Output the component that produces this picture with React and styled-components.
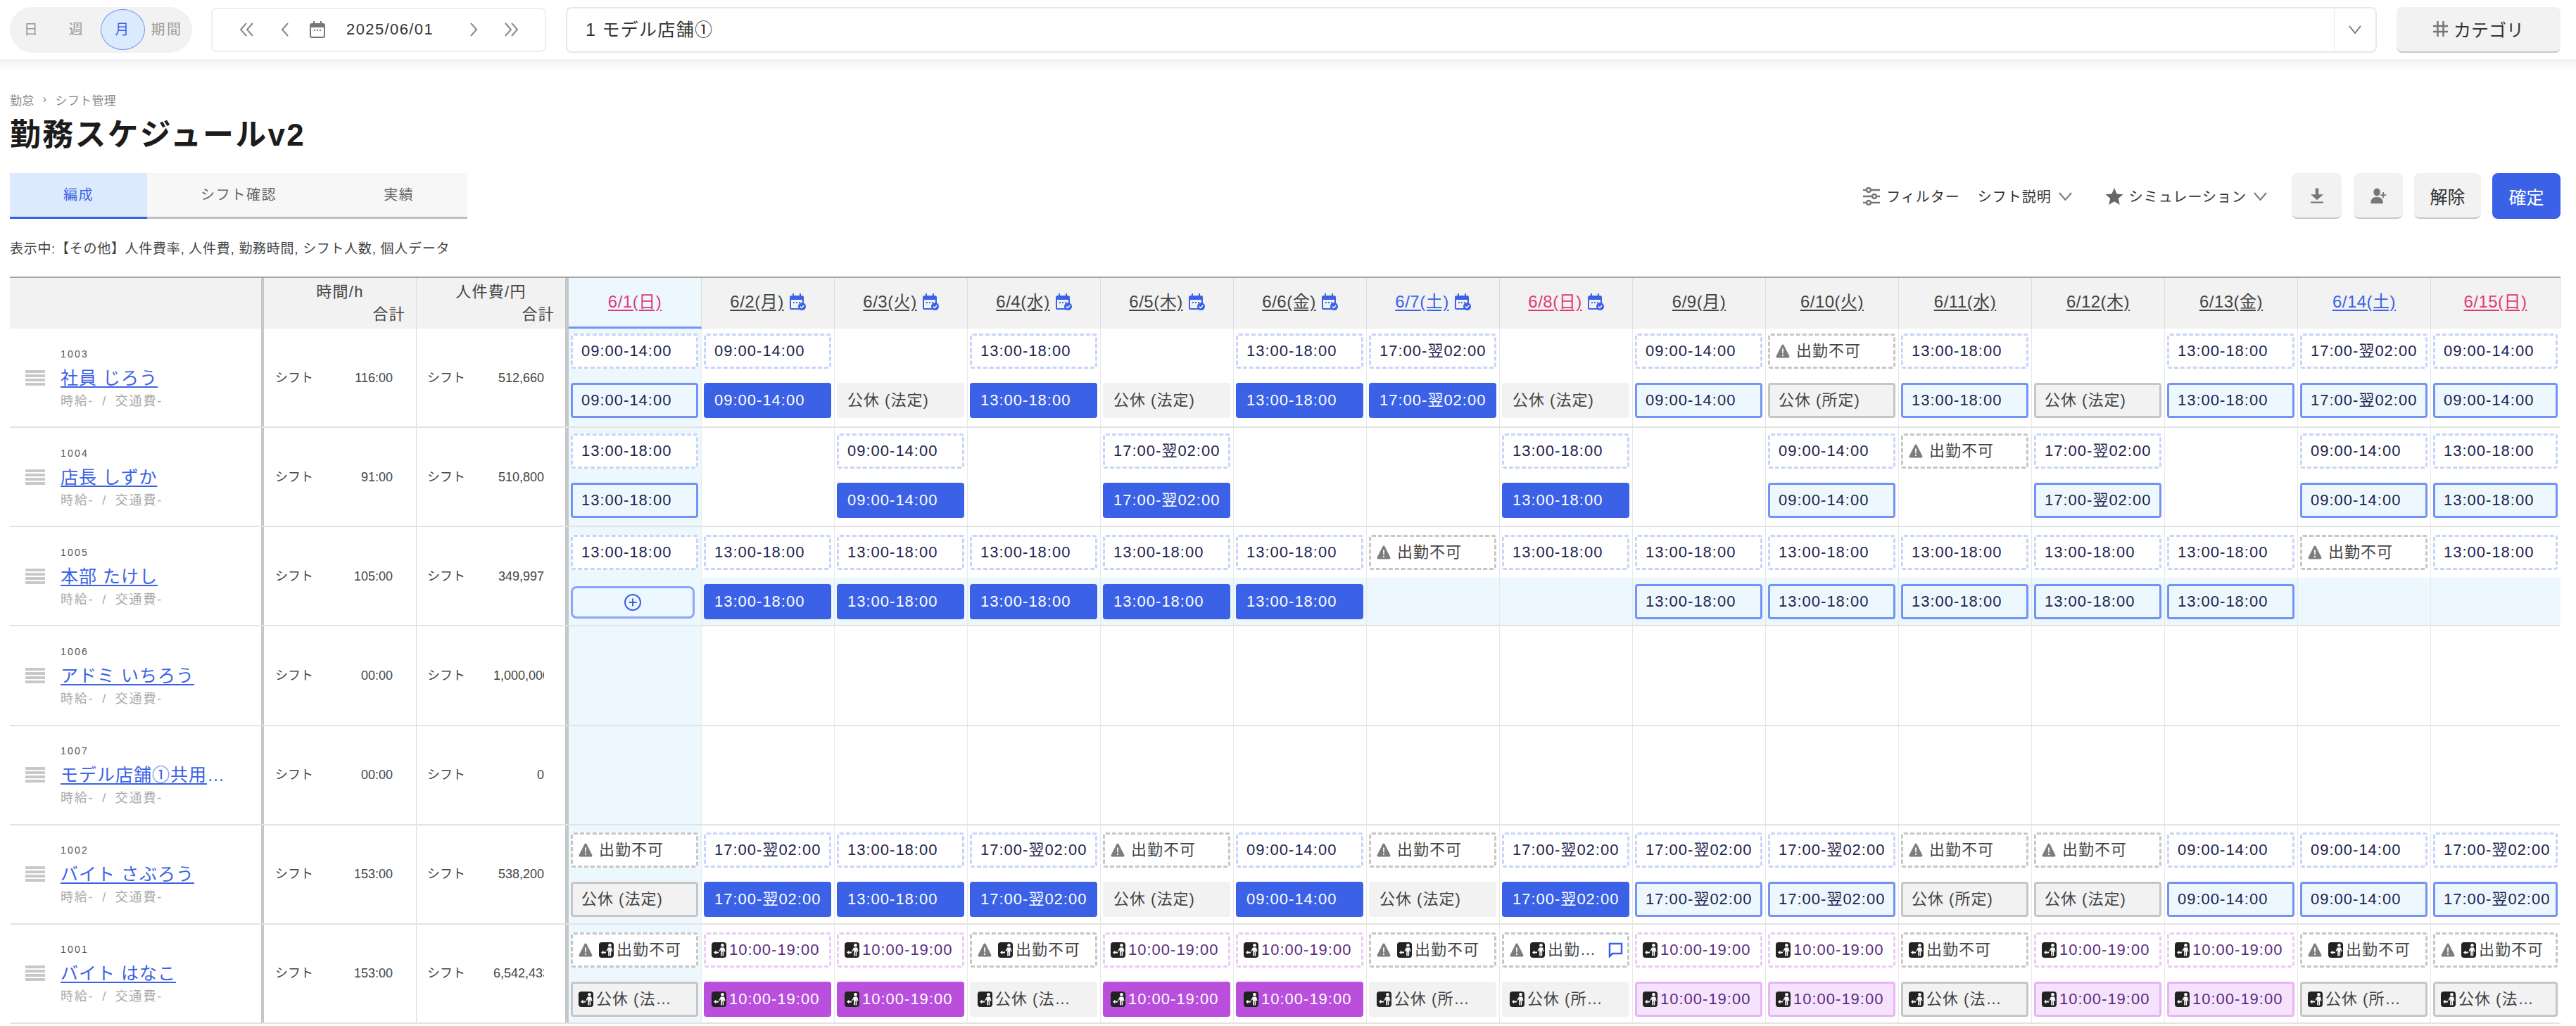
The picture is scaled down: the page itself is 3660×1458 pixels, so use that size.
import React from 'react';
import styled, { createGlobalStyle, css } from 'styled-components';

const Global = createGlobalStyle`
  html, body { margin: 0; padding: 0; background: #fff; overflow: hidden; }
  body { font-family: "Liberation Sans", "Noto Sans CJK JP", sans-serif; color: #333; }
  * { box-sizing: border-box; }
`;

const Page = styled.div`width: 3660px; height: 1458px; overflow: hidden; background: #fff;`;

const Header = styled.header`
  height: 84px; display: flex; align-items: center; padding: 0 22px 0 14px; background: #fff;
`;
const HeaderFade = styled.div`height: 16px; background: linear-gradient(#f1f1f1, #fff);`;

const Pill = styled.div`
  width: 259px; height: 65px; border-radius: 33px; background: #f2f2f2; display: flex; align-items: center;
  padding-left: 1px; margin-right: 27px; flex: none;
`;
const PillItem = styled.div`
  width: ${p => p.$w}px; height: 58px; display: flex; align-items: center; justify-content: center;
  font-size: 20px; letter-spacing: 2.5px; color: #9a9a9a; border-radius: 50%; line-height: 24px;
  ${p => p.$on && css`background: #dceafd; border: 1px solid #7394f5; color: #3b62e6;`}
`;
const DateNav = styled.div`
  width: 476px; height: 63px; flex: none; border: 2px solid #eee; border-radius: 8px; display: flex; align-items: center;
  padding-left: 38px; margin-right: 28px; position: relative;
`;
const NavIcon = styled.svg`width: ${p => p.$w || 22}px; height: 24px; flex: none; margin-left: ${p => p.$ml || 0}px; color: #888;`;
const DateText = styled.span`font-size: 22px; letter-spacing: 1.4px; color: #333; margin-left: 30px; width: 174px;`;
const StoreSelect = styled.div`
  flex: none; width: 2573px; height: 65px; border: 2px solid #e8e8e8; border-radius: 8px; display: flex; align-items: center;
  margin-right: 28px;
`;
const StoreName = styled.div`flex: 1; padding-left: 26px; font-size: 25px; letter-spacing: 1.3px; color: #333; line-height: 30px;`;
const StoreCaret = styled.div`width: 59px; height: 100%; border-left: 1px solid #eaeaea; display: flex; align-items: center; justify-content: center;`;
const CategoryBtn = styled.button`
  flex: 1; height: 65px; background: #f2f2f2; border: 0; border-bottom: 2px solid #c8c8c8; border-radius: 8px;
  display: flex; align-items: center; justify-content: center; gap: 8px;
  font: inherit; font-size: 25px; color: #333;
`;

const Main = styled.main`padding: 0 22px 0 14px;`;
const Crumbs = styled.div`
  margin-top: 31px; height: 20px; display: flex; align-items: center; gap: 12px; font-size: 17px; letter-spacing: .3px; color: #888;
`;
const Title = styled.h1`
  margin: 15px 0 0; height: 52px; line-height: 52px; font-size: 44px; font-weight: 700; color: #1c1c1c; letter-spacing: 2.2px;
`;
const ToolRow = styled.div`margin-top: 28px; height: 65px; display: flex; align-items: stretch; justify-content: space-between;`;
const Tabs = styled.div`display: flex;`;
const Tab = styled.div`
  padding: 0 76px; display: flex; align-items: center; font-size: 20px; letter-spacing: 1.6px; line-height: 26px;
  ${p => p.$on ? css`background: #dceafd; color: #3b62e6; border-bottom: 3px solid #3b62e6;`
                : css`background: #f7f7f7; color: #666; border-bottom: 3px solid #bfbfbf;`}
`;
const Tools = styled.div`display: flex; align-items: center;`;
const ToolText = styled.div`
  display: flex; align-items: center; font-size: 20px; letter-spacing: 1px; color: #333; margin-right: ${p => p.$mr || 0}px;
`;
const GrayBtn = styled.button`
  width: ${p => p.$w}px; height: 65px; margin-left: ${p => p.$ml || 0}px; background: #f2f2f2; border: 0; border-bottom: 2px solid #c8c8c8;
  border-radius: 8px; display: flex; align-items: center; justify-content: center; font: inherit; font-size: 25px; color: #333;
`;
const PrimaryBtn = styled(GrayBtn)`background: #3b62e6; border-bottom: 0; color: #fff;`;

const Note = styled.div`margin-top: 33px; height: 20px; line-height: 20px; font-size: 19px; letter-spacing: .7px; color: #444;`;

const Table = styled.div`margin-top: 29px; border-top: 2px solid #a5a5a5;`;
const gridCols = css`
  display: grid;
  grid-template-columns: 361px 217px 216px repeat(14, 189px) 1fr;
`;
const HeadRow = styled.div`${gridCols} height: 72px; background: #f2f2f2;`;
const Row = styled.div`${gridCols} height: 141.15px; border-bottom: 2px solid #e3e3e3;`;

const BlankHead = styled.div`border-right: 4px solid #c5c8c8;`;
const SumHead = styled.div`
  display: flex; flex-direction: column; padding: 4px 15px 0 0; font-size: 22px; letter-spacing: 1.3px; color: #444;
  border-right: ${p => p.$thick ? '5px solid #c5c8c8' : '1px solid #dcdcdc'};
  & > div { height: 32px; line-height: 32px; }
  & > div:first-child { text-align: center; padding-left: 15px; }
  & > div:last-child { text-align: right; }
`;
const DayHead = styled.div`
  display: flex; align-items: center; justify-content: center; gap: 8px; padding-bottom: 5px;
  border-right: 1px solid #dcdcdc; font-size: 24px; letter-spacing: .5px; line-height: 30px;
  color: ${p => p.$c};
  ${p => p.$today && css`background: #ecf8fe; border-bottom: 3px solid #7394f5; padding-bottom: 2px;`}
  & > span { text-decoration: underline; text-underline-offset: 3px; }
`;

const NameCell = styled.div`
  display: flex; align-items: center; padding-left: 22px; gap: 22px; border-right: 4px solid #c5c8c8; min-width: 0;
`;
const Handle = styled.div`
  width: 28px; height: 22px; flex: none;
  background: repeating-linear-gradient(#c8c8c8 0 4px, #fff 4px 6px);
`;
const NameBlock = styled.div`min-width: 0; display: flex; flex-direction: column; padding-top: 2px;`;
const EmpId = styled.div`font-size: 14px; line-height: 16px; letter-spacing: 2.2px; color: #555;`;
const EmpName = styled.a`
  display: block; margin-top: 10px; max-width: 240px; height: 32px; line-height: 32px; font-size: 25px; letter-spacing: 1px;
  color: #3b62e6; text-decoration: underline; text-decoration-thickness: 2px; text-underline-offset: 3px;
  white-space: nowrap; overflow: hidden; text-overflow: ellipsis;
`;
const EmpSub = styled.div`margin-top: 6px; font-size: 18px; line-height: 22px; letter-spacing: 1.8px; word-spacing: 5px; color: #aaa;`;
const SumCell = styled.div`
  display: flex; align-items: center; justify-content: space-between; font-size: 18px; color: #444; line-height: 24px;
  padding: 0 ${p => p.$pr}px 0 ${p => p.$pl}px;
  border-right: ${p => p.$thick ? '5px solid #c5c8c8' : '1px solid #dcdcdc'};
`;
const SumValue = styled.div`width: 72px; text-align: right; overflow: hidden; white-space: nowrap;`;

const DayCell = styled.div`
  border-right: 1px solid #e8e8e8; display: flex; flex-direction: column; gap: 20px;
  padding: ${p => p.$top}px 4px 0 3px; min-width: 0;
  ${p => p.$today ? css`background: #ecf8fe;` : p.$band && css`background: linear-gradient(#fff 72px, #ecf8fe 72px);`}
  &:last-child { border-right: 0; }
`;
const Slot = styled.div`height: 50px; flex: none;`;

const kinds = {
  plan: css`border: 3px dashed #c8d4fb; background: #fff; color: #1c2350;`,
  off: css`border: 3px dashed #c6c6c6; background: #fff; color: #444;`,
  pplan: css`border: 3px dashed #edc8f8; background: #fff; color: #5c2a7c;`,
  solid: css`background: #3b62e6; color: #fff;`,
  flat: css`background: #f2f2f2; color: #444;`,
  outline: css`border: 3px solid #7394f5; background: #ecf8fe; color: #1c2350;`,
  grayline: css`border: 3px solid #c6c6c6; background: #f2f2f2; color: #444;`,
  psolid: css`background: #b94fdc; color: #fff;`,
  pline: css`border: 3px solid #e8b4f8; background: #f5e2fc; color: #5c2a7c;`,
};
const Chip = styled.div`
  height: 50px; flex: none; border-radius: 4px; display: flex; align-items: center; white-space: nowrap; overflow: hidden;
  font-size: 22px; line-height: 28px; letter-spacing: 1px;
  padding-left: ${p => (p.$lead ? 11 : 15) - (p.$bordered ? 3 : 0)}px; padding-right: 6px;
  ${p => kinds[p.$kind]}
`;
const AddChip = styled.div`
  height: 46px; width: 176px; margin-top: 3px; border: 3px solid #8ba6f7; border-radius: 8px; background: #ecf8fe;
  display: flex; align-items: center; justify-content: center;
`;
const ChipText = styled.span`min-width: 0; overflow: hidden; text-overflow: ellipsis; ${p => p.$max && css`max-width: ${p.$max}px;`}`;
const Warn = styled.svg`width: 20px; height: 20px; flex: none; margin-right: 9px;`;
const Carrier = styled.svg`width: 21px; height: 22px; flex: none; margin-right: ${p => p.$mr ?? 4}px;`;
const Comment = styled.svg`width: 21px; height: 22px; flex: none; margin-left: auto;`;

const Chev = ({ d, w = 22, ml, color = '#888' }) => (
  <NavIcon $w={w} $ml={ml} viewBox={`0 0 ${w} 24`} fill="none" stroke={color} strokeWidth="2"><path d={d} /></NavIcon>
);
const CalendarPlain = () => (
  <NavIcon $w={22} $ml={28} viewBox="0 0 22 24"><path fill="#777" d="M5 0h2v3h8V0h2v3h2a3 3 0 0 1 3 3v15a3 3 0 0 1-3 3H3a3 3 0 0 1-3-3V6a3 3 0 0 1 3-3h2zM2 9v12a1 1 0 0 0 1 1h16a1 1 0 0 0 1-1V9zM6 12h2v2H6zM10 12h2v2h-2zM14 12h2v2h-2z" /></NavIcon>
);
const CalCheck = styled.svg`width: 23px; height: 24px; flex: none;`;
const CalendarCheck = () => (
  <CalCheck viewBox="0 0 23 24">
    <path fill="#3b62e6" d="M4 0h2v3h8V0h2v3h1.5A2.5 2.5 0 0 1 20 5.500v15a2.500 2.500 0 0 1-2.500 2.500h-15A2.500 2.500 0 0 1 0 20.500v-15A2.500 2.500 0 0 1 2.500 3H4zM2 9v11.500a.5.5 0 0 0 .5.5h15a.5.5 0 0 0 .5-.5V9zM5 12h2v2H5zM9 12h2v2H9zM13 12h2v2h-2z" />
    <circle cx="17.500" cy="18.500" r="5.500" fill="#3b62e6" />
    <path d="M15 18.500l2 2 3.200-3.500" stroke="#fff" strokeWidth="1.500" fill="none" />
  </CalCheck>
);
const WarnIcon = () => (
  <Warn viewBox="0 0 20 20"><path fill="#7d7d7d" d="M8.500 1.500c.7-1.300 2.300-1.300 3 0l7.800 15.500c.5 1.200-.2 2.500-1.500 2.500H2.200c-1.300 0-2-1.300-1.500-2.500z" /><path fill="#fff" d="M9 6.500h2l-.3 7H9.300zM9 15h2v2H9z" /></Warn>
);
const CarrierIcon = ({ mr }) => (
  <Carrier $mr={mr} viewBox="0 0 21 22">
    <rect width="21" height="22" rx="4" fill="#222" />
    <circle cx="15.500" cy="4.300" r="2.300" fill="#fff" />
    <path fill="#fff" d="M13 7.500h5l1.500 5.500-1.300.4-1-3v9.100h-1.600v-6h-.8v6h-1.600v-9l-1.500 2.500-1.200-.8z" />
    <path fill="#fff" d="M3 14.500l3.300-2.800v1.800H10v2H6.300v1.800z" />
  </Carrier>
);

const NAMES = { a: '09:00-14:00', b: '13:00-18:00', c: '17:00-翌02:00', p: '10:00-19:00' };
const h = 'h', j = 'j';
const EMP = [
  { id: 1003, name: '社員 じろう', hours: '116:00', cost: '512,660', top: 7,
    plan: ['a','a','','b','','b','c','','a','x','b','','b','c','a'],
    act:  ['a','a',h,'b',h,'b','c',h,'a',j,'b',h,'b','c','a'] },
  { id: 1004, name: '店長 しずか', hours: '91:00', cost: '510,800', top: 8,
    plan: ['b','','a','','c','','','b','','a','x','c','','a','b'],
    act:  ['b','','a','','c','','','b','','a','','c','','a','b'] },
  { id: 1005, name: '本部 たけし', hours: '105:00', cost: '349,997', top: 11, band: true,
    plan: ['b','b','b','b','b','b','x','b','b','b','b','b','b','x','b'],
    act:  ['+','b','b','b','b','b','','','b','b','b','b','b','',''] },
  { id: 1006, name: 'アドミ いちろう', hours: '00:00', cost: '1,000,000', top: 11, plan: [], act: [] },
  { id: 1007, name: 'モデル店舗①共用アカウント', hours: '00:00', cost: '0', top: 11, plan: [], act: [] },
  { id: 1002, name: 'バイト さぶろう', hours: '153:00', cost: '538,200', top: 10,
    plan: ['x','c','b','c','x','a','x','c','c','c','x','x','a','a','c'],
    act:  [h,'c','b','c',h,'a',h,'c','c','c',j,h,'a','a','c'] },
  { id: 1001, name: 'バイト はなこ', hours: '153:00', cost: '6,542,433', top: 11, carrier: true,
    plan: ['y','p','p','y','p','p','y','w','p','p','z','p','p','y','y'],
    act:  [h,'p','p',h,'p','p',j,j,'p','p',h,'p','p',j,h] },
];
const DAYS = ['日','月','火','水','木','金','土','日','月','火','水','木','金','土','日'];

const isOutlined = i => i === 0 || i >= 8;

function PlanChip({ t }) {
  if (!t) return <Slot />;
  if (NAMES[t]) {
    if (t === 'p') return <Chip $kind="pplan" $bordered $lead><CarrierIcon /><ChipText>{NAMES[t]}</ChipText></Chip>;
    return <Chip $kind="plan" $bordered><ChipText>{NAMES[t]}</ChipText></Chip>;
  }
  return (
    <Chip $kind="off" $bordered $lead>
      {t !== 'z' && <WarnIcon />}
      {t !== 'x' && <CarrierIcon />}
      <ChipText $max={t === 'w' ? 74 : undefined}>出勤不可</ChipText>
      {t === 'w' && (
        <Comment viewBox="0 0 21 22" fill="none" stroke="#3b62e6" strokeWidth="2.500"><path d="M2 2h17v14H6l-4 4z" /></Comment>
      )}
    </Chip>
  );
}

function ActChip({ t, i, carrier }) {
  if (!t) return <Slot />;
  if (t === '+') {
    return (
      <AddChip>
        <svg width="26" height="26" viewBox="0 0 26 26" fill="none" stroke="#3b62e6" strokeWidth="2"><circle cx="13" cy="13" r="11" /><path d="M13 7.500v11M7.500 13h11" /></svg>
      </AddChip>
    );
  }
  const o = isOutlined(i);
  if (NAMES[t]) {
    if (t === 'p') return <Chip $kind={o ? 'pline' : 'psolid'} $bordered={o} $lead><CarrierIcon /><ChipText>{NAMES[t]}</ChipText></Chip>;
    return <Chip $kind={o ? 'outline' : 'solid'} $bordered={o}><ChipText>{NAMES[t]}</ChipText></Chip>;
  }
  const label = t === h ? '公休 (法定)' : '公休 (所定)';
  return (
    <Chip $kind={o ? 'grayline' : 'flat'} $bordered={o} $lead={carrier}>
      {carrier && <CarrierIcon />}
      <ChipText $max={carrier ? 108 : undefined}>{label}</ChipText>
    </Chip>
  );
}

export default function App() {
  return (
    <Page>
      <Global />
      <Header>
        <Pill>
          <PillItem $w={60}>日</PillItem>
          <PillItem $w={68}>週</PillItem>
          <PillItem $w={63} $on>月</PillItem>
          <PillItem $w={62}>期間</PillItem>
        </Pill>
        <DateNav>
          <Chev d="M10 3L2 12l8 9M19 3l-8 9 8 9" w={21} />
          <Chev d="M11 3L3 12l8 9" w={14} ml={37} />
          <CalendarPlain />
          <DateText>2025/06/01</DateText>
          <Chev d="M3 3l8 9-8 9" w={14} ml={0} />
          <Chev d="M2 3l8 9-8 9M11 3l8 9-8 9" w={21} ml={36} />
        </DateNav>
        <StoreSelect>
          <StoreName>1 モデル店舗①</StoreName>
          <StoreCaret>
            <svg width="20" height="14" viewBox="0 0 20 14" fill="none" stroke="#777" strokeWidth="2"><path d="M2 2l8 10 8-10" /></svg>
          </StoreCaret>
        </StoreSelect>
        <CategoryBtn>
          <svg width="21" height="24" viewBox="0 0 21 24" fill="none" stroke="#777" strokeWidth="2.500"><path d="M6.500 1v22M14.500 1v22M0 8h21M0 16h21" /></svg>
          カテゴリ
        </CategoryBtn>
      </Header>
      <HeaderFade />
      <Main>
        <Crumbs><span>勤怠</span><span>›</span><span>シフト管理</span></Crumbs>
        <Title>勤務スケジュールv2</Title>
        <ToolRow>
          <Tabs>
            <Tab $on>編成</Tab>
            <Tab>シフト確認</Tab>
            <Tab>実績</Tab>
          </Tabs>
          <Tools>
            <ToolText $mr={25}>
              <svg width="26" height="26" viewBox="0 0 26 26" fill="none" stroke="#777" strokeWidth="2.500" style={{ marginRight: 8 }}>
                <path d="M1 4h5M12 4h13M1 13h13M20 13h5M1 22h5M12 22h13" /><circle cx="9" cy="4" r="3" /><circle cx="17" cy="13" r="3" /><circle cx="9" cy="22" r="3" />
              </svg>
              フィルター
            </ToolText>
            <ToolText $mr={46}>
              シフト説明
              <svg width="21" height="14" viewBox="0 0 21 14" fill="none" stroke="#777" strokeWidth="2" style={{ marginLeft: 9 }}><path d="M2 2l8.500 10L19 2" /></svg>
            </ToolText>
            <ToolText $mr={0}>
              <svg width="26" height="26" viewBox="0 0 24 24" fill="#666" style={{ marginRight: 8 }}><path d="M12 1l3.300 7.700 8.200.7-6.200 5.400 1.900 8.200L12 18.700 4.800 23l1.900-8.200L.5 9.400l8.200-.7z" /></svg>
              シミュレーション
              <svg width="21" height="14" viewBox="0 0 21 14" fill="none" stroke="#777" strokeWidth="2" style={{ marginLeft: 9 }}><path d="M2 2l8.500 10L19 2" /></svg>
            </ToolText>
            <GrayBtn $w={71} $ml={34}>
              <svg width="30" height="30" viewBox="0 0 24 24" fill="#777"><path d="M10.200 3.500h3.600v7h5.400L12 17 4.800 10.500h5.400zM4.800 18.800h14.400v1.700H4.800z" /></svg>
            </GrayBtn>
            <GrayBtn $w={70} $ml={17}>
              <svg width="30" height="30" viewBox="0 0 24 24" fill="#777"><ellipse cx="10.500" cy="8" rx="3.800" ry="4.500" /><path d="M3.500 21c0-5 2-7.500 7-7.500s7 2.500 7 7.500zM17 8h1.500v2.500H21V12h-2.500v2.500H17V12h-2.500v-1.500H17z" /></svg>
            </GrayBtn>
            <GrayBtn $w={95} $ml={16}>解除</GrayBtn>
            <PrimaryBtn $w={97} $ml={16}>確定</PrimaryBtn>
          </Tools>
        </ToolRow>
        <Note>表示中:【その他】人件費率, 人件費, 勤務時間, シフト人数, 個人データ</Note>
        <Table>
          <HeadRow>
            <BlankHead />
            <SumHead><div>時間/h</div><div>合計</div></SumHead>
            <SumHead $thick><div>人件費/円</div><div>合計</div></SumHead>
            {DAYS.map((d, i) => {
              const c = d === '日' ? '#e0397a' : d === '土' ? '#3b62e6' : '#444';
              return (
                <DayHead key={i} $c={c} $today={i === 0}>
                  <span>{`6/${i + 1}(${d})`}</span>
                  {i >= 1 && i <= 7 && <CalendarCheck />}
                </DayHead>
              );
            })}
          </HeadRow>
          {EMP.map(e => (
            <Row key={e.id}>
              <NameCell>
                <Handle />
                <NameBlock>
                  <EmpId>{e.id}</EmpId>
                  <EmpName>{e.name}</EmpName>
                  <EmpSub>時給- / 交通費-</EmpSub>
                </NameBlock>
              </NameCell>
              <SumCell $pl={16} $pr={33}><span>シフト</span><SumValue>{e.hours}</SumValue></SumCell>
              <SumCell $pl={15} $pr={30} $thick><span>シフト</span><SumValue>{e.cost}</SumValue></SumCell>
              {DAYS.map((_, i) => (
                <DayCell key={i} $top={e.top} $today={i === 0} $band={e.band}>
                  <PlanChip t={e.plan[i]} />
                  <ActChip t={e.act[i]} i={i} carrier={e.carrier} />
                </DayCell>
              ))}
            </Row>
          ))}
        </Table>
      </Main>
    </Page>
  );
}
